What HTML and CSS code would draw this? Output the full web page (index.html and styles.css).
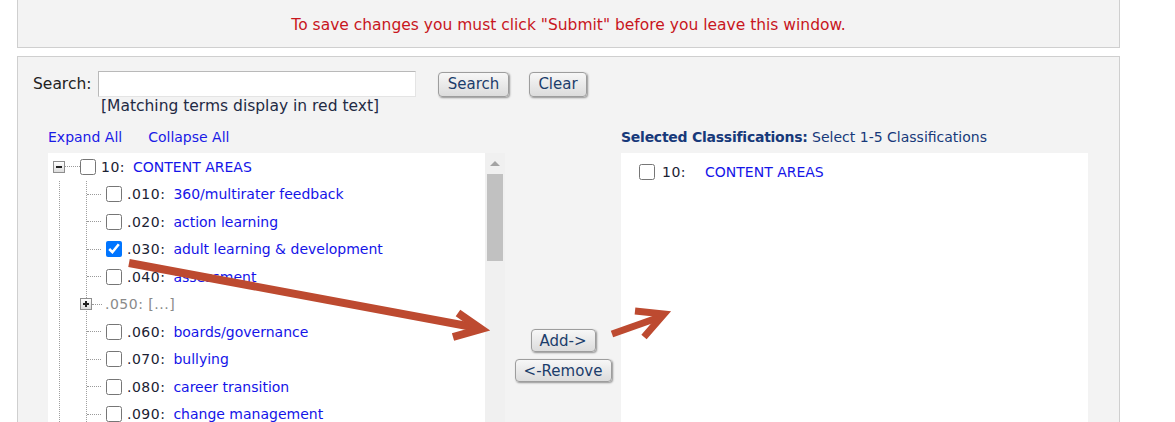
FILE: index.html
```html
<!DOCTYPE html>
<html lang="en">
<head>
    <meta charset="UTF-8">
    <meta name="viewport" content="width=device-width, initial-scale=1.0">
    <title>Classifications</title>
    <link rel="stylesheet" href="styles.css">
</head>
<body>
<div class="page">
    <div class="notice">To save changes you must click "Submit" before you leave this window.</div>

    <div class="panel">
      <div class="search-row">
        <label for="searchText">Search:</label>
        <input type="text" id="searchText">
        <button class="btn btn-search" type="button">Search</button>
        <button class="btn btn-clear" type="button">Clear</button>
      </div>
      <div class="hint">[Matching terms display in red text]</div>

      <div class="picker">
        <div class="tree-links">
          <a href="#">Expand All</a>
          <a href="#">Collapse All</a>
        </div>
        <div></div>
        <div class="selected-title"><strong>Selected Classifications:</strong> Select 1-5 Classifications</div>

        <div class="tree-wrap">
          <div class="tree">
            <div class="node root">
              <span class="toggle"></span>
              <span class="dots dots-root"></span>
              <input type="checkbox">
              <span class="code">10:</span>
              <span class="term">CONTENT AREAS</span>
            </div>
            <div class="branch">
              <ul class="children">
                <li><input type="checkbox"><span class="code">.010:</span><span class="term">360/multirater feedback</span></li>
                <li><input type="checkbox"><span class="code">.020:</span><span class="term">action learning</span></li>
                <li><input type="checkbox" checked><span class="code">.030:</span><span class="term">adult learning &amp; development</span></li>
                <li><input type="checkbox"><span class="code">.040:</span><span class="term">assessment</span></li>
                <li class="collapsed"><span class="toggle plus"></span><span class="dots dots-short"></span><span class="code muted">.050: [...]</span></li>
                <li><input type="checkbox"><span class="code">.060:</span><span class="term">boards/governance</span></li>
                <li><input type="checkbox"><span class="code">.070:</span><span class="term">bullying</span></li>
                <li><input type="checkbox"><span class="code">.080:</span><span class="term">career transition</span></li>
                <li><input type="checkbox"><span class="code">.090:</span><span class="term">change management</span></li>
              </ul>
            </div>
          </div>
          <div class="scrollbar">
            <span class="scroll-up"></span>
            <span class="scroll-thumb"></span>
          </div>
        </div>

        <div class="actions">
          <button class="btn btn-add" type="button">Add-&gt;</button>
          <button class="btn btn-remove" type="button">&lt;-Remove</button>
        </div>

        <div class="selected">
          <div class="selected-item">
            <input type="checkbox">
            <span class="sel-code">10:</span>
            <span class="term">CONTENT AREAS</span>
          </div>
        </div>
      </div>
    </div>
</div>

<svg class="arrows" width="1175" height="422" viewBox="0 0 1175 422">
  <g fill="none" stroke="#bd4a30" stroke-linejoin="miter">
    <line x1="129" y1="263" x2="478" y2="328" stroke-width="8"/>
    <polyline points="458,313 481,329 453,337" stroke-width="8"/>
    <line x1="612" y1="334" x2="660" y2="317" stroke-width="7"/>
    <polyline points="635,311 664,314 644,337" stroke-width="7"/>
  </g>
</svg>
</body>
</html>
```

FILE: styles.css
```css
* {
  box-sizing: border-box;
}

html, body {
  margin: 0;
  padding: 0;
  overflow: hidden;
}

body {
  font-family: "DejaVu Sans", Verdana, sans-serif;
  font-size: 14px;
  color: #222;
  background: #fff;
}

.page {
  width: 1103px;
  margin-left: 17px;
}

.notice {
  margin-top: -1px;
  height: 49px;
  border: 1px solid #cfcfcf;
  background: #f3f3f3;
  color: #c8161d;
  font-size: 15.5px;
  text-align: center;
  line-height: 50px;
}

.panel {
  margin-top: 8px;
  height: 380px;
  border: 1px solid #cfcfcf;
  background: #f3f3f3;
  padding: 14px 0 0 15px;
}

.search-row {
  display: flex;
  align-items: center;
  height: 26px;
}

.search-row label {
  width: 65px;
  font-size: 15.5px;
}

.search-row input {
  width: 318px;
  height: 26px;
  border: 1px solid #b9b9b9;
  border-right-color: #e4e4e4;
  border-bottom-color: #e4e4e4;
  background: #fff;
  margin: 0;
}

.btn {
  font-family: "DejaVu Sans", Verdana, sans-serif;
  font-size: 15px;
  color: #1c3d6b;
  background: linear-gradient(#f7f7f7, #dcdcdc);
  border: 1px solid #9d9d9d;
  border-radius: 4px;
  box-shadow: 1px 1px 2px rgba(0,0,0,0.4);
  padding: 0;
  cursor: pointer;
}

.btn-search {
  margin-left: 22px;
  width: 71px;
  height: 25px;
}

.btn-clear {
  margin-left: 20px;
  width: 58px;
  height: 25px;
}

.hint {
  margin-left: 68px;
  font-size: 15.5px;
  line-height: 19px;
  color: #1f2a44;
}

.picker {
  margin: 12px 0 0 15px;
  display: grid;
  grid-template-columns: 457px 116px 467px;
  grid-template-rows: 18px 300px;
  row-gap: 7px;
}

.tree-links {
  display: flex;
  gap: 26px;
  line-height: 18px;
}

.tree-links a {
  color: #1a1ae6;
  text-decoration: none;
}

.selected-title {
  line-height: 18px;
  color: #17397a;
}

.selected-title strong {
  letter-spacing: -0.25px;
}

.tree-wrap {
  display: flex;
}

.tree {
  flex: 1;
  background: #fff;
  padding-left: 5px;
}

.node, .children li {
  display: flex;
  align-items: center;
  height: 27.5px;
  white-space: nowrap;
}

.toggle {
  position: relative;
  flex: none;
  width: 12px;
  height: 12px;
  border: 1px solid #8e8e8e;
  background: linear-gradient(#ffffff, #dcdcdc);
}

.toggle::before {
  content: "";
  position: absolute;
  left: 2px;
  right: 2px;
  top: 4px;
  height: 2px;
  background: #222;
}

.toggle.plus::after {
  content: "";
  position: absolute;
  top: 2px;
  bottom: 2px;
  left: 4px;
  width: 2px;
  background: #222;
}

.dots {
  flex: none;
  border-top: 1px dotted #9a9a9a;
}

.dots-root {
  width: 15px;
}

.dots-short {
  width: 10px;
  margin-right: 1px;
}

input[type="checkbox"] {
  flex: none;
  width: 16px;
  height: 16px;
  margin: 0;
}

.code {
  margin-left: 5px;
  color: #1b2233;
  letter-spacing: 0.5px;
}

.term {
  margin-left: 8px;
  color: #1414e8;
}

.root .term {
  margin-left: 8px;
}

.muted {
  margin-left: 2px;
  color: #8a8a8a;
}

.branch {
  margin-left: 6px;
  border-left: 1px dotted #a0a0a0;
}

.children {
  list-style: none;
  margin: 0 0 0 26px;
  padding: 0;
  border-left: 1px dotted #a0a0a0;
}

.children li::before {
  content: "";
  flex: none;
  width: 14px;
  margin-right: 5px;
  border-top: 1px dotted #9a9a9a;
}

.children li.collapsed::before {
  display: none;
}

.children li.collapsed .toggle {
  margin-left: -7px;
}

.scrollbar {
  width: 20px;
  background: #f0f0f0;
  display: flex;
  flex-direction: column;
  align-items: center;
  padding-top: 8px;
}

.scroll-up {
  width: 0;
  height: 0;
  border-left: 5px solid transparent;
  border-right: 5px solid transparent;
  border-bottom: 5px solid #a3a3a3;
}

.scroll-thumb {
  margin-top: 8px;
  width: 16px;
  height: 87px;
  background: #c1c1c1;
}

.actions {
  display: flex;
  flex-direction: column;
  align-items: center;
  gap: 7px;
  padding-top: 176px;
}

.btn-add {
  width: 65px;
  height: 23px;
}

.btn-remove {
  width: 97px;
  height: 23px;
}

.selected {
  background: #fff;
  padding: 10px 0 0 18px;
}

.selected-item {
  display: flex;
  align-items: center;
  height: 18px;
}

.sel-code {
  width: 43px;
  margin-left: 7px;
  color: #1b2233;
  letter-spacing: 0.5px;
}

.selected-item .term {
  margin-left: 0;
}

.arrows {
  position: absolute;
  top: 0;
  left: 0;
  pointer-events: none;
}
```
